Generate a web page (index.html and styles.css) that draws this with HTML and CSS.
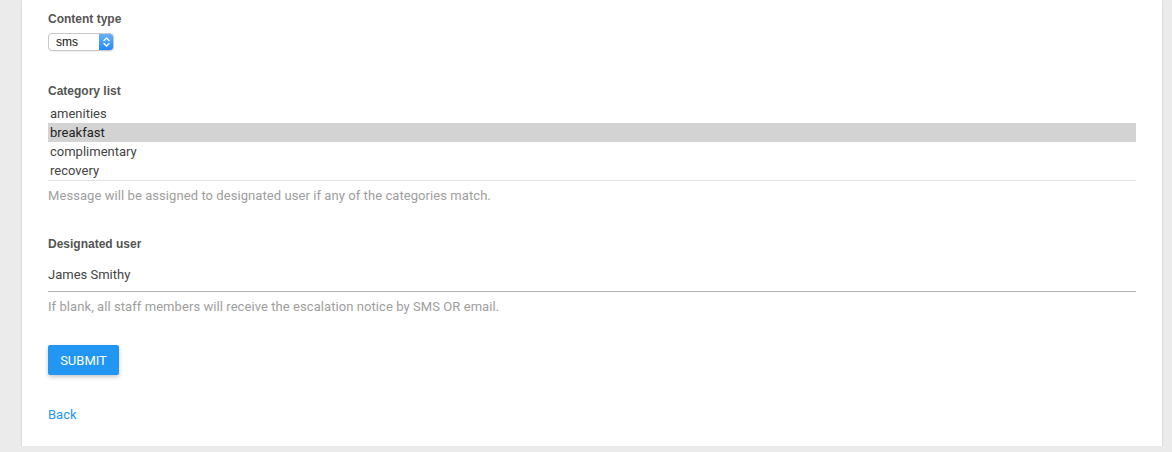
FILE: index.html
```html
<!DOCTYPE html>
<html>
<head>
<meta charset="utf-8">
<link rel="stylesheet" href="styles.css">
</head>
<body>
<div class="card">
  <div class="label">Content type</div>
  <div class="select">
    <span class="select-value">sms</span>
    <span class="select-arrows">
      <svg width="15" height="18" viewBox="0 0 15 18"><path d="M5 7.5 L7.5 5 L10 7.5 M5 10.5 L7.5 13 L10 10.5" fill="none" stroke="#fff" stroke-width="1.3" stroke-linecap="round" stroke-linejoin="round"/></svg>
    </span>
  </div>

  <div class="label label-gap">Category list</div>
  <div class="list">
    <div class="row">amenities</div>
    <div class="row row-selected">breakfast</div>
    <div class="row">complimentary</div>
    <div class="row">recovery</div>
  </div>
  <div class="helper">Message will be assigned to designated user if any of the categories match.</div>

  <div class="label label-gap2">Designated user</div>
  <div class="input">James Smithy</div>
  <div class="helper">If blank, all staff members will receive the escalation notice by SMS OR email.</div>

  <button class="btn">SUBMIT</button>

  <a class="back" href="#">Back</a>
</div>
</body>
</html>
```
FILE: styles.css
```css
html, body {
  margin: 0;
  padding: 0;
  background: #ebebeb;
  font-family: Roboto, "Liberation Sans", Arial, sans-serif;
}
.card {
  margin-left: 22px;
  width: 1140px;
  box-sizing: border-box;
  background: #fff;
  padding: 10px 26px 23px 26px;
  box-shadow: 0 1px 2px rgba(0,0,0,0.18);
  display: flex;
  flex-direction: column;
  align-items: flex-start;
}
.label {
  font-family: "Liberation Sans", Arial, sans-serif;
  font-weight: bold;
  font-size: 12px;
  line-height: 16px;
  padding-top: 1px;
  color: #555;
}
.label-gap { margin-top: 31px; }
.label-gap2 { margin-top: 31px; }
.select {
  margin-top: 6px;
  width: 66px;
  height: 18px;
  box-sizing: border-box;
  border: 1px solid #c8c8c8;
  border-radius: 4px;
  display: flex;
  align-items: stretch;
  overflow: hidden;
  background: #fff;
  box-shadow: 0 1px 1px rgba(0,0,0,0.06);
}
.select-value {
  flex: 1;
  font-family: "Liberation Sans", Arial, sans-serif;
  font-size: 12px;
  line-height: 16px;
  color: #111;
  padding-left: 7px;
}
.select-arrows {
  width: 15px;
  background: linear-gradient(#6ab4fb, #1f86fb);
  display: flex;
  align-items: center;
  justify-content: center;
  margin: -1px -1px -1px 0;
}
.select-arrows svg { display: block; }
.list {
  margin-top: 5px;
  width: 100%;
  border-bottom: 1px solid #e0e0e0;
}
.row {
  height: 19px;
  line-height: 19px;
  font-size: 13px;
  color: #444;
  padding-left: 2px;
}
.row-selected {
  background: #d3d3d3;
  color: #222;
}
.helper {
  margin-top: 7px;
  font-size: 13px;
  line-height: 16px;
  letter-spacing: 0.07px;
  color: #9e9e9e;
}
.input {
  margin-top: 13px;
  width: 100%;
  font-size: 13px;
  line-height: 20px;
  color: #444;
  padding-bottom: 6px;
  border-bottom: 1px solid #b0b0b0;
}
.btn {
  margin-top: 30px;
  height: 30px;
  width: 71px;
  border: none;
  border-radius: 2px;
  background: #2196f3;
  color: #fff;
  font-family: Roboto, "Liberation Sans", Arial, sans-serif;
  font-size: 13px;
  padding: 0;
  box-shadow: 0 2px 4px rgba(0,0,0,0.22);
}
.back {
  margin-top: 32px;
  font-size: 13px;
  line-height: 16px;
  color: #2196f3;
  text-decoration: none;
}
```
